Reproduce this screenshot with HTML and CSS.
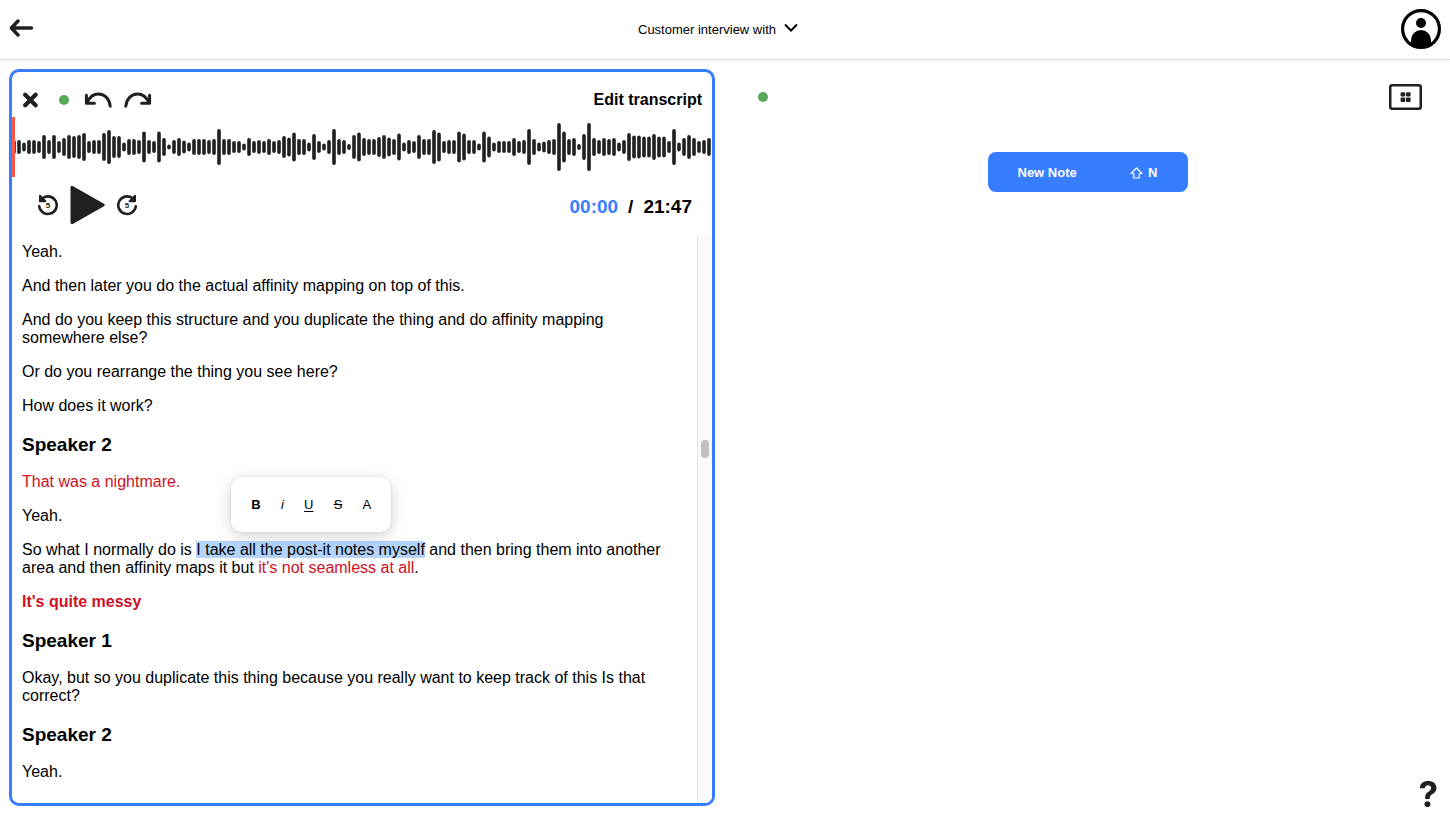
FILE: index.html
```html
<!DOCTYPE html>
<html lang="en">
<head>
<meta charset="utf-8">
<meta name="viewport" content="width=device-width, initial-scale=1">
<title>Customer interview with</title>
<link rel="stylesheet" href="styles.css">
</head>
<body>
<header class="topbar">
  <button class="icon-btn back" aria-label="Back">
    <svg width="26" height="20" viewBox="0 0 26 20"><path class="line" d="M22.5 10H3M9 3L2.4 10L9 17" stroke-width="3.5"/></svg>
  </button>
  <button class="title">
    <span>Customer interview with</span>
    <svg class="chevron" width="14" height="10" viewBox="0 0 14 10"><path d="M1 1.5L7 7.5L13 1.5" fill="none" stroke="#000" stroke-width="2"/></svg>
  </button>
  <button class="icon-btn" aria-label="Account">
    <svg width="40" height="40" viewBox="0 0 40 40"><circle cx="20" cy="20" r="18.4" fill="#fff" stroke="#000" stroke-width="3.2"/><circle cx="20" cy="14" r="5"/><path d="M10 36V31a10 10 0 0 1 20 0V36Q20 41 10 36Z"/></svg>
  </button>
</header>

<main class="workspace">
  <section class="panel" aria-label="Transcript">
    <div class="tools">
      <button class="icon-btn close" aria-label="Close">
        <svg width="16" height="16" viewBox="0 0 16 16"><path class="line" d="M3.2 2.8L13.6 13.2M13.6 2.8L3.2 13.2" stroke-width="4.2"/></svg>
      </button>
      <span class="dot"></span>
      <button class="icon-btn undo" aria-label="Undo">
        <svg width="28" height="18" viewBox="0 0 28 18"><path class="line" d="M2.4 4.2V12.2H10.4M3 11.6C5.8 5.6 9.8 3 14.4 3C21 3 25.5 8.2 26.2 15.2" stroke-width="3"/></svg>
      </button>
      <button class="icon-btn redo" aria-label="Redo">
        <svg width="28" height="18" viewBox="0 0 28 18"><path class="line" d="M25.6 4.2V12.2H17.6M25 11.6C22.2 5.6 18.2 3 13.6 3C7 3 2.5 8.2 1.8 15.2" stroke-width="3"/></svg>
      </button>
      <strong class="mode">Edit transcript</strong>
    </div>

    <div class="wave">
      <svg width="100%" height="60" aria-label="Waveform"><path id="bars" class="bars" d=""/></svg>
    </div>

    <div class="player">
      <button class="icon-btn" aria-label="Back 5 seconds">
        <svg width="22" height="22" viewBox="0 0 22 22"><path class="line" d="M5.8 4A8.8 8.8 0 1 1 2.2 12.4" stroke-width="2.6"/><path class="solid" d="M3 1.8V7.2H8.4Z"/><text class="skip" x="11" y="14">5</text></svg>
      </button>
      <button class="icon-btn play" aria-label="Play">
        <svg width="36" height="40" viewBox="0 0 36 40"><path class="play-shape" d="M2 2.4V37.6L33.2 20Z"/></svg>
      </button>
      <button class="icon-btn" aria-label="Forward 5 seconds">
        <svg width="22" height="22" viewBox="0 0 22 22"><path class="line" d="M16.2 4A8.8 8.8 0 1 0 19.8 12.4" stroke-width="2.6"/><path class="solid" d="M19 1.8V7.2H13.6Z"/><text class="skip" x="11" y="14">5</text></svg>
      </button>
      <div class="time"><span class="now">00:00</span><span>/</span><span>21:47</span></div>
    </div>

    <div class="reader">
      <article class="transcript">
        <p>Yeah.</p>
        <p>And then later you do the actual affinity mapping on top of this.</p>
        <p>And do you keep this structure and you duplicate the thing and do affinity mapping somewhere else?</p>
        <p>Or do you rearrange the thing you see here?</p>
        <p>How does it work?</p>
        <h3>Speaker 2</h3>
        <p class="red">That was a nightmare.</p>
        <p>Yeah.</p>
        <p>So what I normally do is <span class="selected">I take all the post-it notes myself<span class="format" role="toolbar" aria-label="Text format"><button><b>B</b></button><button><i>i</i></button><button><u>U</u></button><button><s>S</s></button><button>A</button></span></span> and then bring them into another area and then affinity maps it but <span class="red">it's not seamless at all</span>.</p>
        <p class="red"><b>It's quite messy</b></p>
        <h3>Speaker 1</h3>
        <p>Okay, but so you duplicate this thing because you really want to keep track of this Is that correct?</p>
        <h3>Speaker 2</h3>
        <p>Yeah.</p>
      </article>
      <div class="track" aria-hidden="true"><div class="thumb"></div></div>
    </div>
  </section>

  <section class="notes" aria-label="Notes">
    <div class="notes-bar">
      <span class="dot"></span>
      <button class="icon-btn" aria-label="Board view">
        <svg width="33" height="26" viewBox="0 0 33 26"><rect x="1.25" y="1.25" width="30.5" height="23.5" rx="2" fill="#fff" stroke="#202020" stroke-width="2.5"/><g fill="#202020"><rect x="11.6" y="8.2" width="4.6" height="4.4" rx="1"/><rect x="17" y="8.2" width="4.6" height="4.4" rx="1"/><rect x="11.6" y="13.6" width="4.6" height="4.4" rx="1"/><rect x="17" y="13.6" width="4.6" height="4.4" rx="1"/></g></svg>
      </button>
    </div>
    <button class="new-note">
      <span>New Note</span>
      <span class="keys"><svg width="13" height="12" viewBox="0 0 13 12"><path d="M6.5 1L12 6.5H9.3V11H3.7V6.5H1Z" fill="none" stroke="#fff" stroke-width="1.2" stroke-linejoin="round"/></svg>N</span>
    </button>
  </section>
</main>
<button class="help" aria-label="Help">?</button>
<script src="wave.js"></script>
</body>
</html>
```
FILE: styles.css
```css
* { box-sizing: border-box; }

body {
  margin: 0;
  height: 100vh;
  display: flex;
  flex-direction: column;
  overflow: hidden;
  background: #fff;
  color: #000;
  font-family: "Liberation Sans", Arial, sans-serif;
  font-size: 16px;
  line-height: 18px;
}

button {
  padding: 0;
  border: 0;
  background: none;
  color: inherit;
  font: inherit;
  cursor: pointer;
}

svg { display: block; }
.icon-btn { display: block; flex: none; }
.line { fill: none; stroke: #202020; stroke-linecap: round; stroke-linejoin: round; }
.solid { fill: #202020; stroke: #202020; stroke-width: 2; stroke-linejoin: round; }
.play-shape { fill: #202020; stroke: #202020; stroke-width: 3; stroke-linejoin: round; }

.dot {
  width: 10px;
  height: 10px;
  border-radius: 50%;
  background: #57a957;
}

.topbar {
  flex: none;
  height: 60px;
  padding: 0 9px 2px;
  display: flex;
  align-items: center;
  justify-content: space-between;
  border-bottom: 1px solid #dcdfe4;
  box-shadow: 0 1px 2px #eef0f4;
}
.back { padding-bottom: 2px; }
.title { padding-top: 2px; display: flex; align-items: center; gap: 8px; font-size: 13px; }
.chevron { margin-bottom: 4px; }

.workspace { flex: 1; min-height: 0; display: flex; }

.panel {
  flex: 0 0 calc(50% - 19px);
  margin: 9px 10px 9px 9px;
  display: flex;
  flex-direction: column;
  overflow: hidden;
  border: 3px solid #377dff;
  border-radius: 10px;
}

.tools { flex: none; height: 45px; padding: 11px 10px 0; display: flex; align-items: center; }
.close { margin-right: 21px; }
.undo { margin: 0 12px 0 15px; }
.mode { margin-left: auto; }

.wave { flex: none; border-left: 3px solid #ff5a45; overflow: hidden; }
.bars { stroke: #202020; stroke-width: 3.6; stroke-linecap: round; }

.player {
  flex: none;
  height: 59px;
  padding: 0 20px 4px 25px;
  display: flex;
  align-items: center;
}
.play { margin: 0 10px 0 11px; }
.skip { font-size: 8px; font-weight: bold; text-anchor: middle; fill: #202020; }
.time {
  margin-left: auto;
  padding-top: 4px;
  display: flex;
  gap: 10px;
  font-size: 19px;
  font-weight: bold;
}
.now { color: #377dff; }

.reader { flex: 1; min-height: 0; display: flex; }
.transcript { flex: 1; padding: 7px 10px 0; overflow: hidden; }
.transcript p { margin: 0 0 16px; }
.transcript h3 { margin: 19px 0 17px; font-size: 19px; line-height: 22px; }
.red { color: #d0101f; }

.track {
  position: relative;
  flex: none;
  width: 15px;
  border-left: 1px solid #e6e6e6;
  background: #fafafa;
}
.thumb {
  position: absolute;
  top: 36%;
  left: 3px;
  width: 8px;
  height: 18px;
  border-radius: 4px;
  background: #c1c1c1;
}

.selected { position: relative; background: #b3d4fb; }
.format {
  position: absolute;
  left: 35px;
  bottom: calc(100% + 9px);
  width: 160px;
  height: 55px;
  padding: 0 20px;
  display: flex;
  align-items: center;
  justify-content: space-between;
  border-radius: 10px;
  background: #fff;
  box-shadow: 0 4px 16px rgba(0, 0, 0, 0.18), 0 0 2px rgba(0, 0, 0, 0.15);
  font-size: 13px;
}
.format u { text-underline-offset: 2px; }

.notes { flex: 1; display: flex; flex-direction: column; align-items: center; }
.notes-bar {
  width: 100%;
  height: 74px;
  padding: 0 28px 0 33px;
  display: flex;
  align-items: center;
  justify-content: space-between;
}
.new-note {
  width: 200px;
  height: 40px;
  margin-top: 18px;
  padding: 1px 30px 0;
  display: flex;
  align-items: center;
  justify-content: space-between;
  border-radius: 8px;
  background: #377dff;
  color: #fff;
  font-size: 13px;
  font-weight: bold;
}
.keys { display: flex; align-items: center; gap: 5px; }

.help {
  position: fixed;
  right: 12px;
  bottom: 1px;
  color: #202020;
  font-family: Inter, sans-serif;
  font-size: 35px;
  font-weight: 700;
  line-height: 40px;
}
```
FILE: wave.js
```js
// Bar heights in pixels, one bar every 5px, centred on the 60px track.
const heights = [
  14, 9, 14, 14, 12, 24, 14, 24, 12, 18, 24, 22, 24, 28, 12, 14, 14, 28, 34, 22, 22, 9, 16, 16, 14,
  31, 14, 12, 31, 18, 5, 14, 18, 13, 9, 16, 16, 16, 14, 16, 36, 16, 16, 12, 12,
  7, 18, 12, 14, 12, 16, 12, 14, 22, 19, 29, 16, 16, 9, 26, 12, 7, 14, 36, 16, 14, 6, 24, 29, 18,
  16, 16, 20, 24, 19, 16, 27, 9, 14, 12, 24, 16, 16, 34, 29, 12, 14, 14, 31, 27, 14, 14, 7,
  31, 21, 9, 12, 12, 12, 18, 12, 14, 36, 16, 9, 11, 14, 16, 48, 31, 16, 18, 6, 26, 48, 18, 14, 18,
  16, 18, 9, 14, 28, 23, 23, 21, 21, 26, 21, 21, 12, 36, 9, 18, 24, 18, 12, 14, 18
];
const path = heights.map((h, i) => {
  const half = (h - 3.6) / 2;
  return `M${4 + i * 5} ${30 - half}v${half * 2}`;
}).join("");
document.getElementById("bars").setAttribute("d", "M-1 25v10" + path);
```
